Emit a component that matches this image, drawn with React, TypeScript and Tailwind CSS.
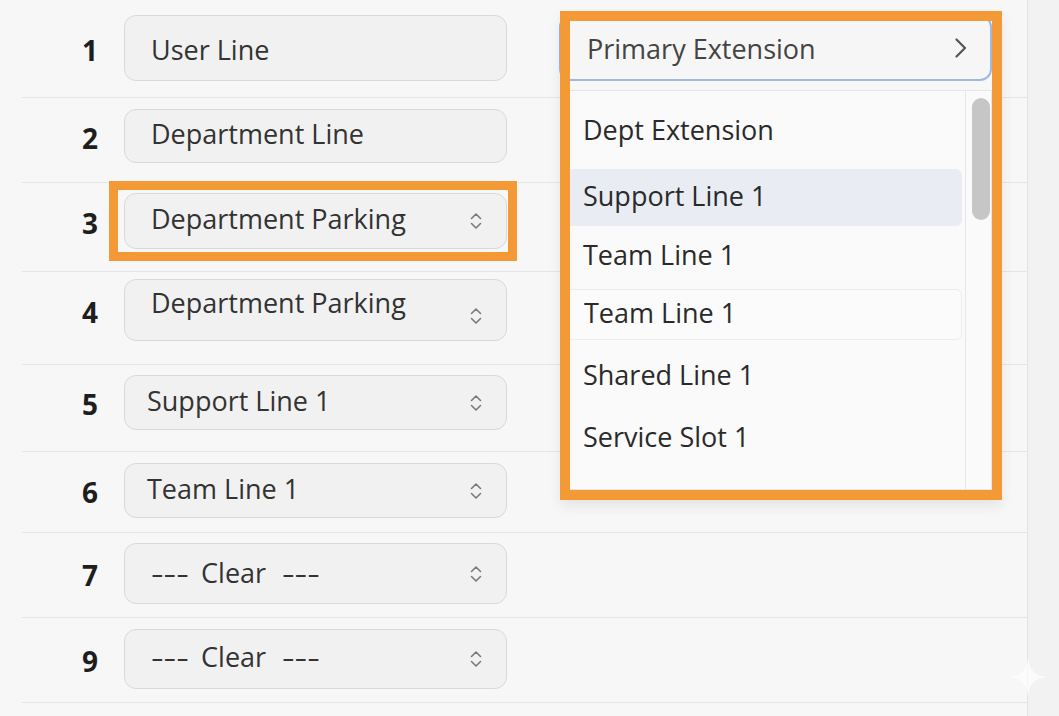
import React from "react";

type Row = {
  num: string;
  label: string;
  select: boolean;
  row: string;
  box: string;
  text?: string;
  chev?: string;
};

const rows: Row[] = [
  { num: "1", label: "User Line", select: false, row: "h-[98px]", box: "mt-[15px] h-[66px]", text: "pl-[26px] pt-[4px]" },
  { num: "2", label: "Department Line", select: false, row: "h-[85px]", box: "mt-[11px] h-[54px]" },
  { num: "3", label: "Department Parking", select: true, row: "h-[89px]", box: "mt-[10px] h-[56px]" },
  {
    num: "4",
    label: "Department Parking",
    select: true,
    row: "h-[93px]",
    box: "mt-[7px] h-[62px]",
    text: "pl-[26px] pb-[14px]",
    chev: "mt-[11px]",
  },
  { num: "5", label: "Support Line 1", select: true, row: "h-[87px]", box: "mt-[10px] h-[55px]", text: "pl-[22px] pb-[3px]" },
  { num: "6", label: "Team Line 1", select: true, row: "h-[81px]", box: "mt-[11px] h-[55px]", text: "pl-[22px] pb-[3px]" },
  { num: "7", label: "--- Clear ---", select: true, row: "h-[85px]", box: "mt-[10px] h-[61px]", text: "pl-[26px] pb-[1px]" },
  { num: "9", label: "--- Clear ---", select: true, row: "h-[85px]", box: "mt-[11px] h-[60px]" },
];

const options = [
  { label: "Dept Extension", cls: "mt-[12px] h-[58px]" },
  { label: "Support Line 1", cls: "mt-[8px] h-[57px] bg-[#e9ecf2] rounded-[6px]" },
  { label: "Team Line 1", cls: "mt-[1px] h-[59px]" },
  { label: "Team Line 1", cls: "mt-[3px] h-[51px] bg-[#fbfbfb] border border-[#ececec] rounded-[6px]" },
  { label: "Shared Line 1", cls: "mt-[7px] h-[59px]" },
  { label: "Service Slot 1", cls: "mt-[3px] h-[59px]" },
];

function UpDown({ className = "" }: { className?: string }) {
  return (
    <svg width="14" height="20" viewBox="0 0 14 20" className={className} fill="none">
      <path d="M2.5 7.5 L7 3 L11.5 7.5" stroke="#7a7a7a" strokeWidth="1.6" strokeLinecap="round" strokeLinejoin="round" />
      <path d="M2.5 12.5 L7 17 L11.5 12.5" stroke="#7a7a7a" strokeWidth="1.6" strokeLinecap="round" strokeLinejoin="round" />
    </svg>
  );
}

// "--- Clear ---" in the original uses long dashes, so stretch the hyphens a bit
function Label({ text }: { text: string }) {
  if (text !== "--- Clear ---") return <>{text}</>;
  return (
    <>
      <span className="inline-block scale-x-[1.45] origin-left mr-[11px]">---</span>
      <span className="ml-[13px]">Clear</span>
      <span className="inline-block scale-x-[1.45] origin-left ml-[16px]">---</span>
    </>
  );
}

function LineRow({ r }: { r: Row }) {
  return (
    <div className={`${r.row} ml-[22px] border-b border-[#e5e5e5]`}>
      <div className={`${r.box} flex items-center`}>
        <span className="w-[76px] text-right text-[28px] font-bold text-[#1e1e1e] leading-none pt-[3px]">{r.num}</span>
        <div className="ml-[26px] w-[383px] h-full rounded-[12px] border border-[#d9d9d9] bg-[#f1f1f1] flex items-center justify-between pr-[23px]">
          <span className={`${r.text ?? "pl-[26px] pb-[3px]"} text-[27px] text-[#333333] whitespace-nowrap`}>
            <Label text={r.label} />
          </span>
          {r.select && <UpDown className={r.chev ?? ""} />}
        </div>
        {r.num === "1" && (
          <div className="ml-[52px] w-[433px] h-full rounded-[12px] border-2 border-[#9db9dd] bg-[#f6f6f6] flex items-center justify-between pl-[26px] pr-[22px]">
            <span className="text-[27px] text-[#444444] whitespace-nowrap pt-[3px]">Primary Extension</span>
            <svg width="14" height="22" viewBox="0 0 14 22" fill="none">
              <path d="M2.5 2.5 L11 11 L2.5 19.5" stroke="#555555" strokeWidth="2.2" strokeLinecap="round" strokeLinejoin="round" />
            </svg>
          </div>
        )}
      </div>
    </div>
  );
}

export default function App() {
  return (
    <div className="relative w-[1059px] h-[716px] overflow-hidden bg-[#f7f7f7] flex font-['Open_Sans','Liberation_Sans',sans-serif]">
      <div className="w-[1028px] h-full border-r border-[#e3e3e3] flex flex-col">
        {rows.map((r) => (
          <LineRow key={r.num} r={r} />
        ))}
        <div className="h-[13px] ml-[22px]" />
      </div>
      <div className="flex-1 h-full bg-[#f2f2f2]" />

      {/* open dropdown list */}
      <div className="absolute left-[560px] top-[90px] w-[432px] h-[400px] bg-[#fafafa] border border-[#e6e6e6] flex">
        <div className="flex-1 flex flex-col pl-[2px] pr-[3px]">
          {options.map((o, i) => (
            <div key={i} className={`${o.cls} flex items-center pl-[20px] pb-[3px] text-[27px] text-[#2a2a2a] whitespace-nowrap`}>
              {o.label}
            </div>
          ))}
        </div>
        <div className="w-[26px] h-full border-l border-[#e6e6e6] flex justify-center">
          <div className="mt-[7px] w-[18px] h-[122px] rounded-full bg-[#c6c6c6] ml-[4px]" />
        </div>
      </div>

      {/* annotation boxes */}
      <div className="absolute left-[109px] top-[181px] w-[408px] h-[80px] border-[9px] border-[#f39a37]" />
      <div className="absolute left-[560px] top-[11px] w-[442px] h-[489px] border-[10px] border-[#f39a37] shadow-[0_6px_12px_rgba(0,0,0,0.08)]" />

      {/* watermark sparkle */}
      <svg className="absolute left-[1009px] top-[657px] opacity-70" width="38" height="40" viewBox="0 0 38 40">
        <path d="M19 0 C20 12 25 19 38 20 C25 21 20 28 19 40 C18 28 13 21 0 20 C13 19 18 12 19 0 Z" fill="#ffffff" />
      </svg>
    </div>
  );
}
